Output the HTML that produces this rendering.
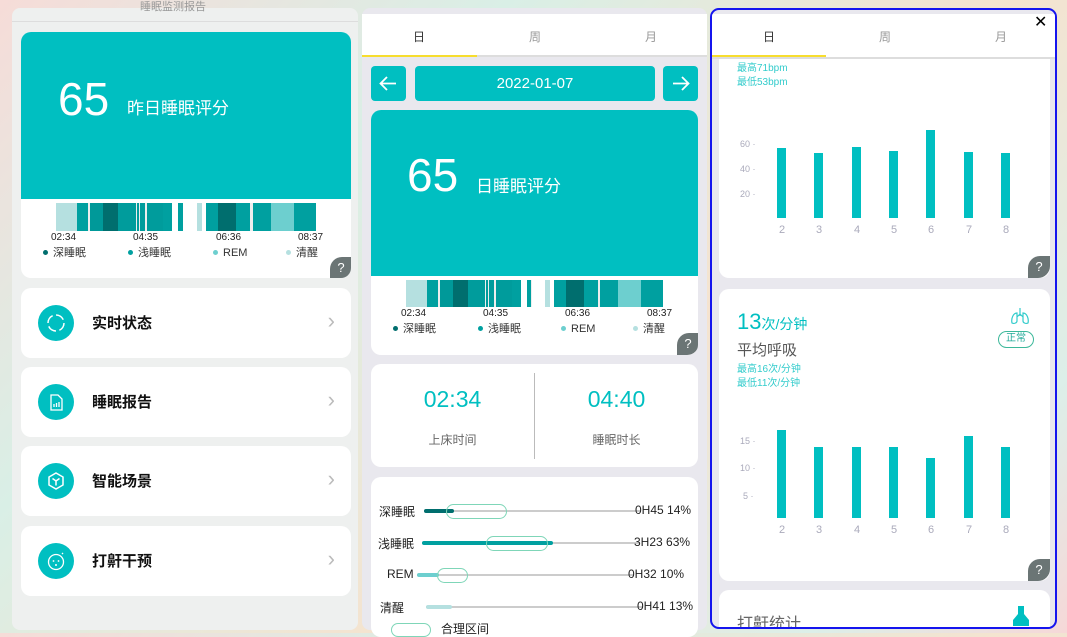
<!DOCTYPE html>
<html><head><meta charset="utf-8"><style>
*{margin:0;padding:0;box-sizing:border-box}
body{width:1067px;height:633px;overflow:hidden;position:relative;font-family:"Liberation Sans","Noto Sans CJK SC",sans-serif;background:linear-gradient(135deg,#f6dcd8,#d9efe6 30%,#f5e3cf 60%,#dcefe9 85%,#f6d8d8)}
.a{position:absolute}
.card{position:absolute;background:#fff;border-radius:10px}
.teal{background:#00bfc1}
.q{position:absolute;width:22px;height:22px;background:#6b7575;border-radius:12px 0 12px 0;color:#fff;font-size:13px;text-align:center;line-height:22px}
.seg{position:absolute;top:0;height:100%}
.lbl{position:absolute;font-size:10px;color:#222}
.leg{position:absolute;font-size:11px;color:#333;line-height:14px;height:14px;white-space:nowrap}
.leg b{display:inline-block;width:5px;height:5px;border-radius:50%;margin-right:5px;vertical-align:middle;position:relative;top:-1px}
.item .ic{position:absolute;left:17px;top:17px;width:36px;height:36px;border-radius:50%;background:#00bfc1}
.item .t{position:absolute;left:71px;top:24px;font-size:15px;font-weight:bold;color:#111}
.item .c{position:absolute;right:16px;top:20px;color:#bbb;font-size:22px}
.tab{position:absolute;font-size:12px;color:#999}
.bar{position:absolute;width:9px;background:#00bfc1}
.yl{position:absolute;font-size:9px;color:#aab}
.xl{position:absolute;font-size:11px;color:#aab;width:20px;text-align:center}
.row{position:absolute;left:0;width:327px;height:20px}
.row .n{position:absolute;font-size:12px;color:#222;top:2px}
.row .g{position:absolute;top:9px;height:2px;background:#ccc}
.row .f{position:absolute;top:8px;height:4px;border-radius:2px}
.row .o{position:absolute;top:3px;height:15px;border:1.5px solid #7fd6b8;border-radius:8px}
.row .v{position:absolute;font-size:12px;color:#222;top:2px}
</style></head><body>

<!-- LEFT PANEL -->
<div class="a" style="left:12px;top:8px;width:346px;height:622px;background:#eef0ef;border-radius:8px"></div>
<div class="a" style="left:12px;top:21px;width:346px;height:1px;background:#ddd"></div>
<div class="a" style="left:140px;top:-2px;font-size:11px;color:#999">睡眠监测报告</div>
<div class="card" style="left:21px;top:32px;width:330px;height:246px;overflow:hidden">
  <div class="a teal" style="left:0;top:0;width:330px;height:167px"></div>
  <div class="a" style="left:37px;top:40px;font-size:46px;color:#fff">65</div>
  <div class="a" style="left:106px;top:62px;font-size:17px;color:#fff">昨日睡眠评分</div>
  <div class="a sb" style="left:35px;top:171px;width:260px;height:28px;background:#eee"></div>
  <div class="lbl" style="left:30px;top:200px">02:34</div>
  <div class="lbl" style="left:112px;top:200px">04:35</div>
  <div class="lbl" style="left:195px;top:200px">06:36</div>
  <div class="lbl" style="left:277px;top:200px">08:37</div>
  <div class="leg" style="left:22px;top:214px"><b style="background:#006e6e"></b>深睡眠</div>
  <div class="leg" style="left:107px;top:214px"><b style="background:#00a0a0"></b>浅睡眠</div>
  <div class="leg" style="left:192px;top:214px"><b style="background:#6dcfcf"></b>REM</div>
  <div class="leg" style="left:265px;top:214px"><b style="background:#b5e0e0"></b>清醒</div>
  <div class="q" style="left:309px;top:225px">?</div>
</div>
<div class="card item" style="left:21px;top:288px;width:330px;height:70px"><div class="ic"><svg width="36" height="36"><circle cx="18" cy="18" r="8" fill="none" stroke="#fff" stroke-width="1.5" stroke-dasharray="9 3.5"/></svg></div><div class="t">实时状态</div><div class="c">›</div></div>
<div class="card item" style="left:21px;top:367px;width:330px;height:70px"><div class="ic"><svg width="36" height="36"><path d="M13 11h7l4 4v11h-11z" fill="none" stroke="#fff" stroke-width="1.3"/><path d="M16 23v-3M18.5 23v-4M21 23v-5" stroke="#fff" stroke-width="1.3"/></svg></div><div class="t">睡眠报告</div><div class="c">›</div></div>
<div class="card item" style="left:21px;top:446px;width:330px;height:70px"><div class="ic"><svg width="36" height="36"><path d="M18 10l7 4v8l-7 4-7-4v-8z" fill="none" stroke="#fff" stroke-width="1.5"/><path d="M14.5 15.5l3.5 2.5 3.5-2.5M18 18v4.5" fill="none" stroke="#fff" stroke-width="1.5"/></svg></div><div class="t">智能场景</div><div class="c">›</div></div>
<div class="card item" style="left:21px;top:526px;width:330px;height:70px"><div class="ic"><svg width="36" height="36"><circle cx="18" cy="19" r="7.5" fill="none" stroke="#fff" stroke-width="1.3"/><circle cx="15.5" cy="18" r="0.9" fill="#fff"/><circle cx="20.5" cy="18" r="0.9" fill="#fff"/><circle cx="18" cy="22" r="1" fill="#fff"/><path d="M24 11l1-1" stroke="#fff" stroke-width="1.3"/></svg></div><div class="t">打鼾干预</div><div class="c">›</div></div>

<!-- MIDDLE PANEL -->
<div class="a" style="left:362px;top:8px;width:345px;height:622px;background:#e9e8ee;border-radius:8px"></div>
<div class="a" style="left:362px;top:14px;width:345px;height:43px;background:#fff;border-bottom:2px solid #ddd"></div>
<div class="a" style="left:362px;top:55px;width:115px;height:2px;background:#f7dd2e"></div>
<div class="tab" style="left:413px;top:28px;color:#333">日</div>
<div class="tab" style="left:529px;top:28px">周</div>
<div class="tab" style="left:645px;top:28px">月</div>
<div class="a teal" style="left:371px;top:66px;width:35px;height:35px;border-radius:4px"><svg width="35" height="35"><path d="M25 17.5H10M16 11l-6.5 6.5L16 24" fill="none" stroke="#fff" stroke-width="1.8"/></svg></div>
<div class="a teal" style="left:415px;top:66px;width:240px;height:35px;border-radius:4px;color:#fff;text-align:center;line-height:35px;font-size:15px">2022-01-07</div>
<div class="a teal" style="left:663px;top:66px;width:35px;height:35px;border-radius:4px"><svg width="35" height="35"><path d="M10 17.5h15M19 11l6.5 6.5L19 24" fill="none" stroke="#fff" stroke-width="1.8"/></svg></div>
<div class="card" style="left:371px;top:110px;width:327px;height:245px;overflow:hidden">
  <div class="a teal" style="left:0;top:0;width:327px;height:166px"></div>
  <div class="a" style="left:36px;top:38px;font-size:46px;color:#fff">65</div>
  <div class="a" style="left:105px;top:62px;font-size:17px;color:#fff">日睡眠评分</div>
  <div class="a sb" style="left:35px;top:170px;width:257px;height:27px;background:#eee"></div>
  <div class="lbl" style="left:30px;top:198px">02:34</div>
  <div class="lbl" style="left:112px;top:198px">04:35</div>
  <div class="lbl" style="left:194px;top:198px">06:36</div>
  <div class="lbl" style="left:276px;top:198px">08:37</div>
  <div class="leg" style="left:22px;top:212px"><b style="background:#006e6e"></b>深睡眠</div>
  <div class="leg" style="left:107px;top:212px"><b style="background:#00a0a0"></b>浅睡眠</div>
  <div class="leg" style="left:190px;top:212px"><b style="background:#6dcfcf"></b>REM</div>
  <div class="leg" style="left:262px;top:212px"><b style="background:#b5e0e0"></b>清醒</div>
  <div class="q" style="left:306px;top:223px">?</div>
</div>
<div class="card" style="left:371px;top:364px;width:327px;height:103px">
  <div class="a" style="left:0;top:22px;width:163px;text-align:center;font-size:23px;color:#00bfc1">02:34</div>
  <div class="a" style="left:0;top:67px;width:163px;text-align:center;font-size:12px;color:#666">上床时间</div>
  <div class="a" style="left:163px;top:9px;width:1px;height:86px;background:#bbb"></div>
  <div class="a" style="left:164px;top:22px;width:163px;text-align:center;font-size:23px;color:#00bfc1">04:40</div>
  <div class="a" style="left:164px;top:67px;width:163px;text-align:center;font-size:12px;color:#666">睡眠时长</div>
</div>
<div class="card" style="left:371px;top:477px;width:327px;height:160px;overflow:hidden">
  <div class="row" style="top:24px"><span class="n" style="left:8px">深睡眠</span><div class="g" style="left:53px;width:217px"></div><div class="f" style="left:53px;width:30px;background:#006e6e"></div><div class="o" style="left:75px;width:61px"></div><span class="v" style="left:264px">0H45 14%</span></div>
  <div class="row" style="top:56px"><span class="n" style="left:7px">浅睡眠</span><div class="g" style="left:51px;width:218px"></div><div class="f" style="left:51px;width:131px;background:#00a0a0"></div><div class="o" style="left:115px;width:62px"></div><span class="v" style="left:263px">3H23 63%</span></div>
  <div class="row" style="top:88px"><span class="n" style="left:16px">REM</span><div class="g" style="left:46px;width:217px"></div><div class="f" style="left:46px;width:22px;background:#6dcfcf"></div><div class="o" style="left:66px;width:31px"></div><span class="v" style="left:257px">0H32 10%</span></div>
  <div class="row" style="top:120px"><span class="n" style="left:9px">清醒</span><div class="g" style="left:55px;width:217px"></div><div class="f" style="left:55px;width:26px;background:#b5e0e0"></div><span class="v" style="left:266px">0H41 13%</span></div>
  <div class="a" style="left:20px;top:146px;width:40px;height:14px;border:1.5px solid #7fd6b8;border-radius:8px"></div>
  <div class="a" style="left:70px;top:143px;font-size:12px;color:#222">合理区间</div>
</div>

<!-- RIGHT PANEL -->
<div class="a" style="left:710px;top:8px;width:347px;height:621px;background:#e9e8ee;border:2px solid #1515ee;border-radius:9px;overflow:hidden">
  <div class="a" style="left:0;top:4px;width:343px;height:45px;background:#fff;border-bottom:2px solid #ddd"></div>
  <div class="a" style="left:0;top:45px;width:114px;height:2px;background:#f7dd2e"></div>
  <div class="tab" style="left:51px;top:18px;color:#333">日</div>
  <div class="tab" style="left:167px;top:18px">周</div>
  <div class="tab" style="left:283px;top:18px">月</div>
  <div class="a" style="left:322px;top:2px;font-size:16px;color:#000">✕</div>
  <div class="card" style="left:7px;top:49px;width:331px;height:219px;border-radius:0 0 10px 10px">
    <div class="a" style="left:18px;top:0px;font-size:10px;color:#3cc">最高71bpm</div>
    <div class="a" style="left:18px;top:14px;font-size:10px;color:#3cc">最低53bpm</div>
    <div class="yl" style="left:21px;top:80px">60 ·</div>
    <div class="yl" style="left:21px;top:105px">40 ·</div>
    <div class="yl" style="left:21px;top:130px">20 ·</div>
    <div class="bar" style="left:58px;top:89px;height:70px"></div>
    <div class="bar" style="left:95px;top:94px;height:65px"></div>
    <div class="bar" style="left:133px;top:88px;height:71px"></div>
    <div class="bar" style="left:170px;top:92px;height:67px"></div>
    <div class="bar" style="left:207px;top:71px;height:88px"></div>
    <div class="bar" style="left:245px;top:93px;height:66px"></div>
    <div class="bar" style="left:282px;top:94px;height:65px"></div>
    <div class="xl" style="left:53px;top:165px">2</div><div class="xl" style="left:90px;top:165px">3</div><div class="xl" style="left:128px;top:165px">4</div><div class="xl" style="left:165px;top:165px">5</div><div class="xl" style="left:202px;top:165px">6</div><div class="xl" style="left:240px;top:165px">7</div><div class="xl" style="left:277px;top:165px">8</div>
    <div class="q" style="left:309px;top:197px">?</div>
  </div>
  <div class="card" style="left:7px;top:279px;width:331px;height:292px">
    <div class="a" style="left:18px;top:20px;font-size:22px;color:#00bfc1;white-space:nowrap">13<span style="font-size:14px">次/分钟</span></div>
    <div class="a" style="left:18px;top:50px;font-size:15px;color:#555">平均呼吸</div>
    <div class="a" style="left:18px;top:71px;font-size:10px;color:#3cc">最高16次/分钟</div>
    <div class="a" style="left:18px;top:85px;font-size:10px;color:#3cc">最低11次/分钟</div>
    <svg class="a" style="left:290px;top:17px" width="22" height="22"><path d="M11 2v8M11 8l-3 3M11 8l3 3M8 7c-4 0-6 6-5 10 2 1 5 0 5-2zM14 7c4 0 6 6 5 10-2 1-5 0-5-2z" fill="none" stroke="#3cc" stroke-width="1.2"/></svg>
    <div class="a" style="left:279px;top:42px;width:36px;height:17px;border:1.5px solid #3cb89a;border-radius:9px;font-size:10px;color:#2a9;text-align:center;line-height:14px">正常</div>
    <div class="yl" style="left:21px;top:147px">15 ·</div>
    <div class="yl" style="left:21px;top:174px">10 ·</div>
    <div class="yl" style="left:24px;top:202px">5 ·</div>
    <div class="bar" style="left:58px;top:141px;height:88px"></div>
    <div class="bar" style="left:95px;top:158px;height:71px"></div>
    <div class="bar" style="left:133px;top:158px;height:71px"></div>
    <div class="bar" style="left:170px;top:158px;height:71px"></div>
    <div class="bar" style="left:207px;top:169px;height:60px"></div>
    <div class="bar" style="left:245px;top:147px;height:82px"></div>
    <div class="bar" style="left:282px;top:158px;height:71px"></div>
    <div class="xl" style="left:53px;top:235px">2</div><div class="xl" style="left:90px;top:235px">3</div><div class="xl" style="left:128px;top:235px">4</div><div class="xl" style="left:165px;top:235px">5</div><div class="xl" style="left:202px;top:235px">6</div><div class="xl" style="left:240px;top:235px">7</div><div class="xl" style="left:277px;top:235px">8</div>
    <div class="q" style="left:309px;top:270px">?</div>
  </div>
  <div class="card" style="left:7px;top:580px;width:331px;height:60px">
    <div class="a" style="left:18px;top:20px;font-size:16px;color:#666">打鼾统计</div>
    <svg class="a" style="left:292px;top:14px" width="20" height="22"><path d="M7 2h6v8l5 6v6H2v-6l5-6z" fill="#00bfc1"/></svg>
  </div>
</div>

<script>
var segs=[[0,21,"#b5e0e0"],[21,32,"#00a0a0"],[34,47,"#009999"],[47,62,"#006e6e"],[62,79,"#009c9c"],[80,82,"#009c9c"],[83,88,"#009c9c"],[90,106,"#009c9c"],[106,115,"#00a0a0"],[115,121,"#fff"],[121,126,"#00a0a0"],[126,140,"#fff"],[140,145,"#b5e0e0"],[145,149,"#fff"],[149,161,"#00a0a0"],[161,179,"#006e6e"],[179,193,"#00a0a0"],[195,213,"#00a0a0"],[213,236,"#6dcfcf"],[236,258,"#00a0a0"]];
document.querySelectorAll('.sb').forEach(function(b){var w=b.offsetWidth/258;segs.forEach(function(s){var d=document.createElement('div');d.className='seg';d.style.left=(s[0]*w)+'px';d.style.width=((s[1]-s[0])*w)+'px';d.style.background=s[2];b.appendChild(d);});});
</script>
</body></html>
